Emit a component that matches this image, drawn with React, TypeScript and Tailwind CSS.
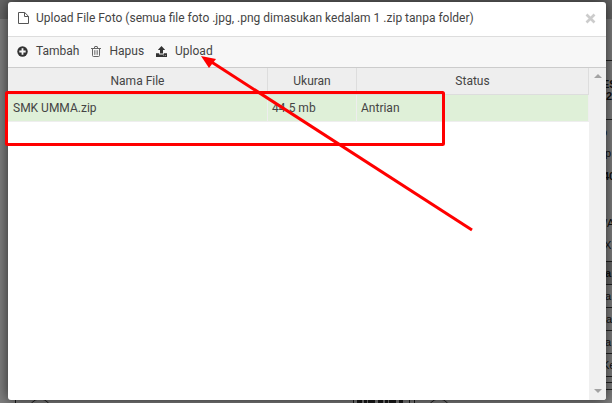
import { useState } from "react";
import type { ReactNode } from "react";

type UploadFile = { name: string; size: string; status: string };

const initialFiles: UploadFile[] = [
  { name: "SMK UMMA.zip", size: "44.5 mb", status: "Antrian" },
];

function FileIcon() {
  return (
    <svg width="11" height="12" viewBox="0 0 11 12" fill="none" stroke="#555" className="shrink-0">
      <path d="M.5.5h6.2l3.8 3.8v7.2H.5zM6.5.5v4h4" />
    </svg>
  );
}

function PlusIcon() {
  return (
    <svg width="11" height="11" viewBox="0 0 11 11" className="shrink-0">
      <circle cx="5.5" cy="5.5" r="5.2" fill="#333" />
      <path d="M5.5 2.3v6.4M2.3 5.5h6.4" stroke="#f7f7f7" strokeWidth="1.8" />
    </svg>
  );
}

function TrashIcon() {
  return (
    <svg width="10" height="11" viewBox="0 0 10 11" fill="none" stroke="#666" className="shrink-0">
      <path d="M0 2.5h10M3.3 2.3l.5-1.8h2.4l.5 1.8" />
      <path d="M1.5 2.5v7q0 1 1 1h5q1 0 1-1v-7" />
      <path d="M3.5 4.2v4.6M5 4.2v4.6M6.5 4.2v4.6" strokeWidth=".7" />
    </svg>
  );
}

function UploadIcon() {
  return (
    <svg width="11" height="11" viewBox="0 0 11 11" fill="#333" className="shrink-0">
      <path d="M5.5 0 9.2 4H7v3.5H4V4H1.8z" />
      <path d="M0 7.3h3.2v1.2h4.6V7.3H11V11H0z" />
      <path d="M7.3 9.4h.9v.7h-.9zM9 9.4h.9v.7H9z" fill="#f7f7f7" />
    </svg>
  );
}

function ToolButton({ icon, children }: { icon: ReactNode; children: ReactNode }) {
  return (
    <button type="button" className="flex items-center gap-2 whitespace-nowrap">
      {icon}
      {children}
    </button>
  );
}

// Dimmed page behind the dialog, only its edges show
function Backdrop() {
  return (
    <div aria-hidden="true" className="absolute inset-0 overflow-hidden bg-[#808080]">
      <div className="h-[19px] bg-[#666]" />
      <svg className="absolute right-0 top-0" width="12" height="403" stroke="#222">
        <path d="M0 60.5h12M0 119.5h12M0 261.5h12M0 284.5h12M0 307.5h12M0 330.5h12M0 353.5h12M0 376.5h12M0 382.5h12M0 389.5h12" />
        <path d="M0 262h12v22H0z" fill="#6a6a6a" stroke="none" />
        <g fill="#111" stroke="none" fontFamily="Liberation Sans, sans-serif" fontSize="11">
          <text x="2" y="88" fontWeight="bold">ES</text>
          <text x="6" y="100" fontWeight="bold">2</text>
          <text x="1" y="136">o</text>
          <text x="5" y="157">p</text>
          <text x="3" y="180" fontWeight="bold">40</text>
          <text x="4" y="227">/A</text>
          <text x="4" y="249">X</text>
          <text x="5" y="277" fontWeight="bold">a</text>
          <text x="5" y="300">a</text>
          <text x="0" y="323">na</text>
          <text x="5" y="346">a</text>
          <text x="2" y="369">Ke</text>
        </g>
      </svg>
      <svg className="absolute bottom-0 left-0" width="606" height="5" fill="none" stroke="#1c1c1c">
        <path d="M15.5 0v5" />
        <circle cx="40" cy="12" r="11" />
        <circle cx="439" cy="12" r="11" />
        <path d="M353.5 2v3M409.5 2v3M414.5 2v3" />
        <path d="M357 3.5h46" strokeWidth="3" strokeDasharray="5 2 3 1 7 3" />
      </svg>
    </div>
  );
}

// Red box and arrow that point out the queued file and the upload button
function Annotations() {
  return (
    <svg className="pointer-events-none absolute left-0 top-0" width="612" height="403" fill="none" stroke="#f00">
      <rect x="6.5" y="92.5" width="437" height="52" rx="1" strokeWidth="3" />
      <path d="M210 61 472 230" strokeWidth="3" />
      <path d="m201 56 15 3-7 9z" fill="#f00" stroke="none" />
    </svg>
  );
}

export default function App() {
  const [files] = useState<UploadFile[]>(initialFiles);

  return (
    <div className="relative flex min-h-screen flex-col pt-0.5 pr-1.5 pb-[3px] pl-2 font-['Roboto',sans-serif] text-xs text-[#444]">
      <Backdrop />
      <div
        role="dialog"
        aria-labelledby="upload-title"
        className="relative flex grow flex-col overflow-hidden rounded-[3px] bg-white shadow-[0_0_14px_rgba(0,0,0,0.7)]"
      >
        <header className="flex h-[35px] items-center gap-[7px] border-b border-[#ddd] px-2.5 pb-0.5">
          <FileIcon />
          <h1 id="upload-title" className="grow whitespace-nowrap">
            Upload File Foto (semua file foto .jpg, .png dimasukan kedalam 1 .zip tanpa folder)
          </h1>
          <button type="button" aria-label="Tutup">
            <svg width="11" height="11" viewBox="0 0 11 11" stroke="#ccc" strokeWidth="2.6">
              <path d="m1.5 1.5 8 8m0-8-8 8" />
            </svg>
          </button>
        </header>

        <div className="flex h-[31px] items-center gap-3 border-b border-[#ccc] bg-[#f7f7f7] pb-0.5 pl-[9px]">
          <ToolButton icon={<PlusIcon />}>Tambah</ToolButton>
          <ToolButton icon={<TrashIcon />}>Hapus</ToolButton>
          <ToolButton icon={<UploadIcon />}>Upload</ToolButton>
        </div>

        <div className="flex grow">
          <div className="min-w-0 grow">
            <table className="w-full table-fixed border-separate border-spacing-0">
              <colgroup>
                <col className="w-[260px]" />
                <col className="w-[89px]" />
                <col />
              </colgroup>
              <thead>
                <tr className="h-[27px] bg-[#eee]">
                  {["Nama File", "Ukuran", "Status"].map((title) => (
                    <th key={title} className="border-r border-b border-[#ddd] p-0 font-normal">
                      {title}
                    </th>
                  ))}
                </tr>
              </thead>
              <tbody>
                {files.map((file) => (
                  <tr key={file.name} className="h-[27px] bg-[#dff0d8]">
                    <td className="border-r border-b border-[#eee] py-0 pr-0 pl-[5px]">{file.name}</td>
                    <td className="border-r border-b border-[#eee] py-0 pr-0 pl-1">{file.size}</td>
                    <td className="border-r border-b border-[#eee] py-0 pr-0 pl-1">{file.status}</td>
                  </tr>
                ))}
              </tbody>
            </table>
          </div>
          <div className="flex w-[17px] shrink-0 flex-col items-center justify-between bg-[#f0f0f0] pt-1.5 pb-[7px]">
            <svg width="8" height="4" fill="#a3a3a3">
              <path d="M4 0 8 4H0z" />
            </svg>
            <svg width="8" height="4" fill="#a3a3a3">
              <path d="M0 0h8L4 4z" />
            </svg>
          </div>
        </div>
      </div>
      <Annotations />
    </div>
  );
}
